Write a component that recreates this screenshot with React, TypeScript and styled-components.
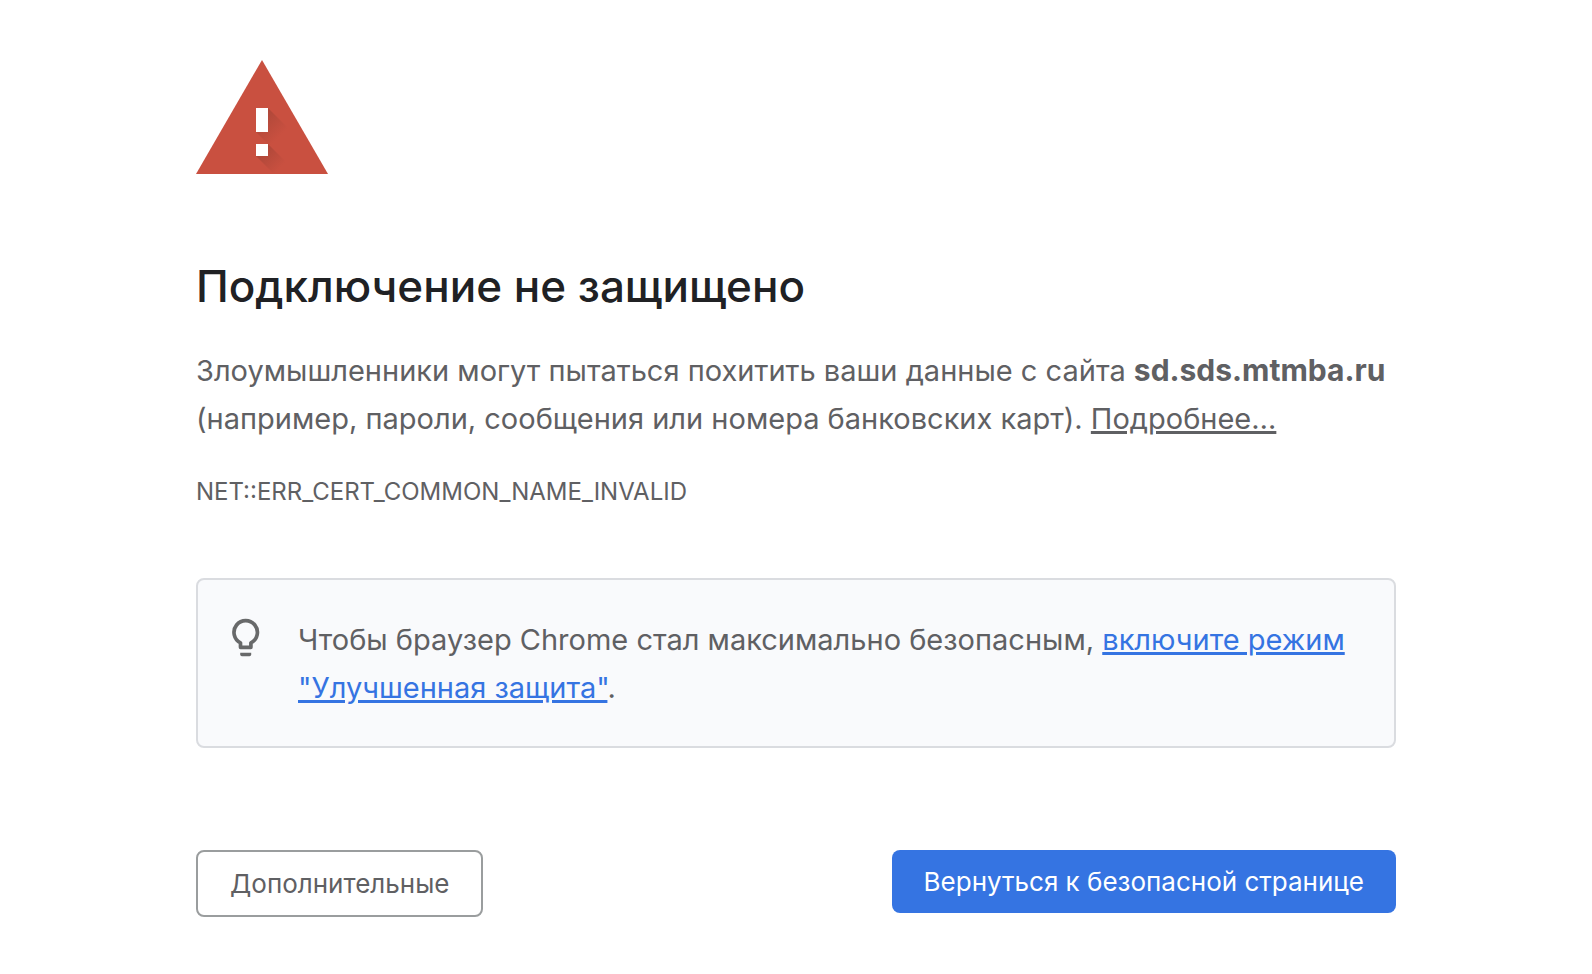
import React from "react";
import styled, { createGlobalStyle } from "styled-components";

const GlobalStyle = createGlobalStyle`
  body {
    margin: 0;
    background: #fff;
    color: #5f6063;
    font-family: Inter, "Liberation Sans", sans-serif;
    font-size: 29px;
    line-height: 48px;
  }
`;

const Page = styled.main`
  box-sizing: border-box;
  width: 100%;
  max-width: 1200px;
  margin: 0 auto;
  padding-top: 60px;
`;

const WarningIcon = styled.svg`
  display: block;
  width: 132px;
  height: 114px;
  margin-bottom: 80px;
`;

const Title = styled.h1`
  margin: 0 0 28px;
  color: #202124;
  font-size: 44px;
  font-weight: 500;
  line-height: 64px;
`;

const Message = styled.p`
  margin: 0;
`;

const Host = styled.strong`
  font-size: 30px;
`;

const TextLink = styled.a<{ $accent?: boolean }>`
  color: ${(p) => (p.$accent ? "#3574e2" : "inherit")};
  text-decoration-thickness: 3px;
`;

const ErrorCode = styled.p`
  margin: 29px 0 66px;
  font-size: 24px;
  line-height: 40px;
`;

const Tip = styled.section`
  display: flex;
  gap: 32px;
  padding: 36px 32px 34px;
  border: 2px solid #dadce0;
  border-radius: 8px;
  background: #f9fafc;
`;

const BulbIcon = styled.svg`
  flex: none;
  width: 36px;
  height: 48px;
`;

const TipText = styled.p`
  margin: 0;
`;

const Actions = styled.div`
  display: flex;
  justify-content: space-between;
  align-items: flex-start;
  margin-top: 102px;
`;

const Button = styled.button<{ $primary?: boolean }>`
  padding: 16px 32px;
  border: ${(p) => (p.$primary ? "0" : "2px solid #9a9d9e")};
  border-radius: 8px;
  background: ${(p) => (p.$primary ? "#3574e2" : "#fff")};
  color: ${(p) => (p.$primary ? "#fff" : "inherit")};
  font-family: inherit;
  font-size: 26px;
  line-height: 31px;
`;

export default function App() {
  return (
    <>
      <GlobalStyle />
      <Page>
        <WarningIcon viewBox="0 0 132 114" aria-hidden="true">
          <defs>
            <linearGradient id="barShade" gradientUnits="userSpaceOnUse" x1="66" y1="54" x2="86" y2="74">
              <stop offset="0" stopColor="#8c3c30" stopOpacity="0.45" />
              <stop offset="1" stopColor="#8c3c30" stopOpacity="0" />
            </linearGradient>
            <linearGradient id="dotShade" gradientUnits="userSpaceOnUse" x1="66" y1="90" x2="84" y2="108">
              <stop offset="0" stopColor="#8c3c30" stopOpacity="0.45" />
              <stop offset="1" stopColor="#8c3c30" stopOpacity="0" />
            </linearGradient>
          </defs>
          <path d="M66 0L132 114H0Z" fill="#c95040" />
          <path d="M72 48L98 74L86 98L60 72H72Z" fill="url(#barShade)" />
          <path d="M72 84L98 110V114H78L60 96H72Z" fill="url(#dotShade)" />
          <path d="M60 48H72V72H60ZM60 84H72V96H60Z" fill="#fff" />
        </WarningIcon>
        <Title>Подключение не защищено</Title>
        <Message>
          Злоумышленники могут пытаться похитить ваши данные с сайта{" "}
          <Host>sd.sds.mtmba.ru</Host> (например, пароли, сообщения или номера банковских
          карт). <TextLink href="#details">Подробнее…</TextLink>
        </Message>
        <ErrorCode>NET::ERR_CERT_COMMON_NAME_INVALID</ErrorCode>
        <Tip>
          <BulbIcon viewBox="0 0 36 48" aria-hidden="true">
            <path
              d="M10.5 31.3V26.8A11.7 11.7 0 1 1 20.9 26.8V31.3Z"
              fill="none"
              stroke="#68696a"
              strokeWidth="3.7"
              strokeLinejoin="round"
            />
            <path d="M10.2 36.8H21.2V38.5Q21.2 40.2 19.5 40.2H11.9Q10.2 40.2 10.2 38.5Z" fill="#68696a" />
          </BulbIcon>
          <TipText>
            Чтобы браузер Chrome стал максимально безопасным,{" "}
            <TextLink href="#protection" $accent>
              включите режим "Улучшенная защита"
            </TextLink>
            .
          </TipText>
        </Tip>
        <Actions>
          <Button type="button">Дополнительные</Button>
          <Button type="button" $primary>
            Вернуться к безопасной странице
          </Button>
        </Actions>
      </Page>
    </>
  );
}
